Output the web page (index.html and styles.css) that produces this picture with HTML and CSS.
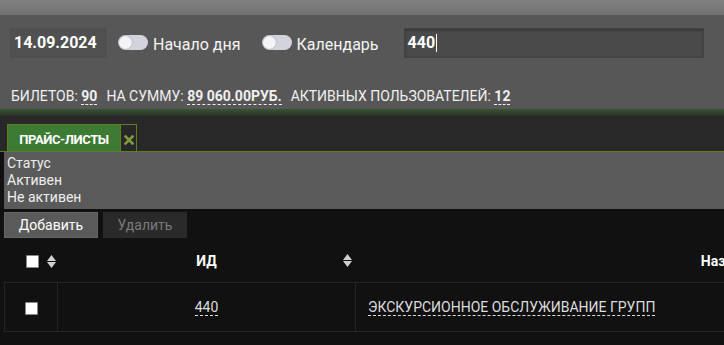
FILE: index.html
```html
<!DOCTYPE html>
<html lang="ru">
<head>
    <meta charset="UTF-8">
    <title>Прайс-листы</title>
    <link rel="stylesheet" href="styles.css">
</head>
<body>
    <div class="top-strip"></div>

    <div class="toolbar">
        <div class="toolbar-row">
            <div class="date-box">14.09.2024</div>
            <label class="switch"><span class="track"><span class="knob"></span></span>Начало дня</label>
            <label class="switch"><span class="track"><span class="knob"></span></span>Календарь</label>
            <div class="search">440<span class="caret"></span></div>
        </div>
        <div class="stats">
            <span>Билетов: <b class="val">90</b></span>
            <span>На сумму: <b class="val">89 060.00руб.</b></span>
            <span>Активных пользователей: <b class="val">12</b></span>
        </div>
    </div>

    <div class="green-line"></div>

    <div class="tabs">
        <div class="tab">Прайс-листы</div>
        <div class="tab-close">
            <svg width="10" height="10" viewBox="0 0 10 10"><path d="M1.5 1.5 L8.5 8.5 M8.5 1.5 L1.5 8.5" stroke="#7f9b3b" stroke-width="2.6" stroke-linecap="square"/></svg>
        </div>
    </div>

    <div class="filter">
        <div>Статус</div>
        <div>Активен</div>
        <div>Не активен</div>
    </div>

    <div class="grid">
        <div class="actions">
            <button class="btn">Добавить</button>
            <button class="btn btn-disabled">Удалить</button>
        </div>
        <table class="list">
            <colgroup>
                <col class="col-check">
                <col class="col-id">
                <col>
            </colgroup>
            <thead>
                <tr>
                    <th class="head-check">
                        <span class="check"></span>
                        <svg class="sort" width="9" height="13" viewBox="0 0 9 13"><path d="M4.5 0 L9 6 L0 6 Z M0 7 L9 7 L4.5 13 Z" fill="#cfcfcf"/></svg>
                    </th>
                    <th>ИД
                        <svg class="sort sort-right" width="9" height="13" viewBox="0 0 9 13"><path d="M4.5 0 L9 6 L0 6 Z M0 7 L9 7 L4.5 13 Z" fill="#cfcfcf"/></svg>
                    </th>
                    <th>Название</th>
                </tr>
            </thead>
            <tbody>
                <tr>
                    <td><span class="check"></span></td>
                    <td><span class="link">440</span></td>
                    <td class="left"><span class="link">ЭКСКУРСИОННОЕ ОБСЛУЖИВАНИЕ ГРУПП</span></td>
                </tr>
            </tbody>
        </table>
    </div>
</body>
</html>
```

FILE: styles.css
```css
:root {
    --panel: #575757;
    --dark: #282828;
    --black: #111111;
    --green: #3d7a34;
    --olive: #5d7d2a;
    --text: #f2f2f2;
}
body {
    margin: 0;
    font-family: Roboto, "Liberation Sans", sans-serif;
    background: var(--black);
    color: var(--text);
    width: 724px;
    height: 345px;
    overflow: hidden;
}
.top-strip {
    height: 15px;
    background: linear-gradient(#808080, #727272);
}
.toolbar {
    background: var(--panel);
    height: 94px;
    padding: 13px 0 0 10px;
    box-sizing: border-box;
}
.toolbar-row {
    display: flex;
    align-items: center;
    height: 30px;
}
.date-box {
    width: 97px;
    height: 30px;
    line-height: 30px;
    padding-left: 4px;
    box-sizing: border-box;
    background: #505050;
    font-weight: 700;
    font-size: 16px;
    color: #fff;
}
.switch {
    display: flex;
    align-items: center;
    font-size: 16px;
    color: #f4f4f4;
    margin-left: 11px;
    margin-right: 10px;
    padding-top: 3px;
}
.track {
    width: 30px;
    height: 15px;
    border-radius: 8px;
    background: #d2d3dc;
    margin-right: 5px;
    position: relative;
    top: -2px;
}
.knob {
    position: absolute;
    left: 1px;
    top: 1px;
    width: 13px;
    height: 13px;
    border-radius: 50%;
    background: #f4f4f6;
    box-shadow: 0 0 2px rgba(0, 0, 0, 0.3);
}
.search {
    margin-left: 15px;
    width: 300px;
    height: 30px;
    line-height: 30px;
    box-sizing: border-box;
    padding-left: 3px;
    background: #4a4a4a;
    border: 1px solid #444;
    box-shadow: inset 0 1px 3px rgba(0, 0, 0, 0.35);
    font-weight: 700;
    font-size: 16px;
    color: #fff;
    display: flex;
    align-items: center;
}
.caret {
    display: inline-block;
    width: 1px;
    height: 18px;
    background: #fff;
    margin-left: 1px;
}
.stats {
    margin-top: 30px;
    font-size: 14px;
    text-transform: uppercase;
    color: #f0f0f0;
    display: flex;
    gap: 9px;
    margin-left: 1px;
}
.val {
    font-weight: 700;
    border-bottom: 1px dashed #eee;
}
.green-line {
    height: 7px;
    background: linear-gradient(#38552f, #2b302a);
}
.tabs {
    background: var(--dark);
    height: 36px;
    padding: 8px 0 0 7px;
    box-sizing: border-box;
    display: flex;
    border-bottom: 1px solid var(--olive);
}
.tab {
    width: 114px;
    background: var(--green);
    border: 1px solid var(--olive);
    border-bottom: none;
    box-sizing: border-box;
    font-size: 13px;
    font-weight: 700;
    text-transform: uppercase;
    letter-spacing: -0.4px;
    color: #fff;
    text-align: center;
    padding-top: 7px;
}
.tab-close {
    width: 16px;
    border: 1px solid var(--olive);
    border-left: none;
    border-bottom: none;
    box-sizing: border-box;
    text-align: center;
    padding-top: 5px;
}
.filter {
    margin-left: 4px;
    height: 57px;
    background: #5a5a5a;
    font-size: 14px;
    line-height: 17px;
    padding: 3px 0 0 3px;
    box-sizing: border-box;
    color: #eee;
}
.grid {
    padding: 3px 0 0 4px;
}
.actions {
    display: flex;
    gap: 5px;
}
.btn {
    font-family: Roboto, "Liberation Sans", sans-serif;
    font-size: 14px;
    height: 26px;
    padding: 0;
    width: 94px;
    background: #5a5a5a;
    border: 1px solid #666;
    color: #fff;
}
.btn-disabled {
    width: 84px;
    background: #2a2a2a;
    border-color: #2a2a2a;
    color: #7a7a7a;
}
.list {
    border-collapse: collapse;
    table-layout: fixed;
    width: 1106px;
    margin-top: 1px;
}
.col-check {
    width: 53px;
}
.col-id {
    width: 298px;
}
.list th {
    height: 43px;
    font-size: 14px;
    font-weight: 700;
    color: #fff;
    position: relative;
    padding: 0;
    white-space: nowrap;
}
.list td {
    height: 48px;
    border: 1px solid #242424;
    font-size: 14px;
    color: #ddd;
    text-align: center;
    padding: 0;
}
.list th.head-check {
    text-align: left;
    padding-left: 21px;
}
.check {
    display: inline-block;
    width: 11px;
    height: 11px;
    background: #fff;
    border: 1px solid #888;
    border-radius: 1px;
    vertical-align: middle;
}
.sort {
    vertical-align: middle;
    margin-left: 5px;
}
.sort-right {
    position: absolute;
    right: 4px;
    top: 15px;
}
.list td.left {
    text-align: left;
    padding-left: 12px;
}
.link {
    border-bottom: 1px dashed #ddd;
}
```
